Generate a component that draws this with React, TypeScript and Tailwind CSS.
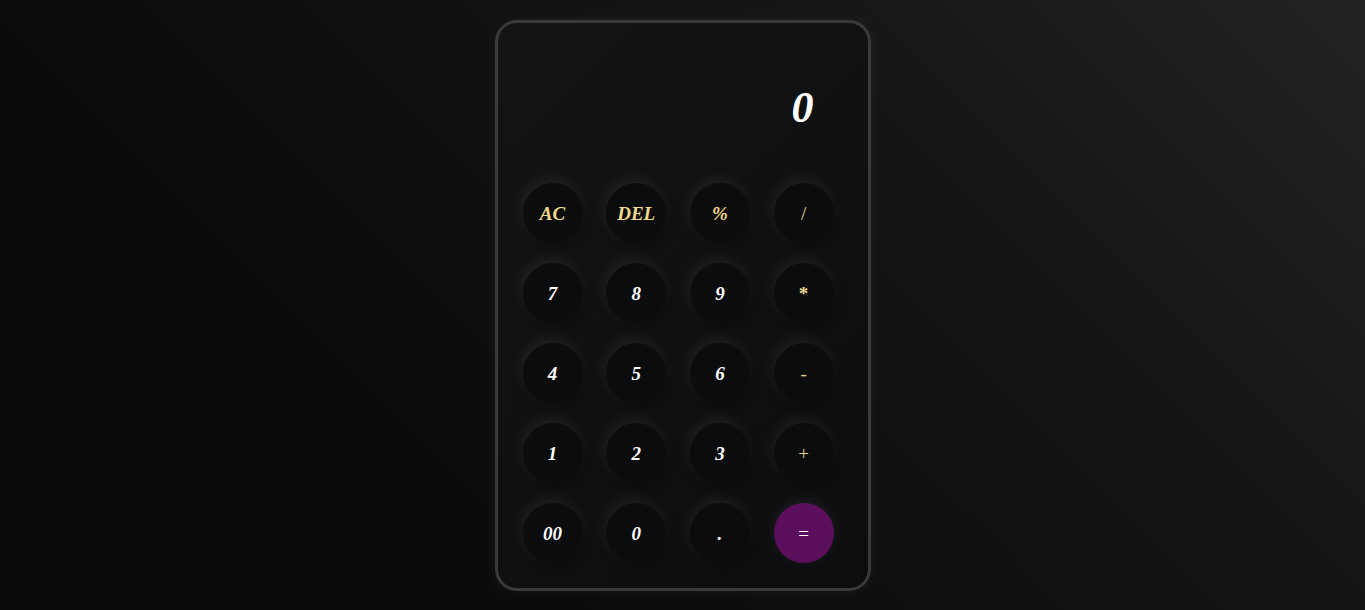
import React from "react";

type Btn = { label: string; kind: "num" | "fn" | "op" | "opb" | "eq" };

const rows: Btn[][] = [
  [
    { label: "AC", kind: "fn" },
    { label: "DEL", kind: "fn" },
    { label: "%", kind: "fn" },
    { label: "/", kind: "op" },
  ],
  [
    { label: "7", kind: "num" },
    { label: "8", kind: "num" },
    { label: "9", kind: "num" },
    { label: "*", kind: "opb" },
  ],
  [
    { label: "4", kind: "num" },
    { label: "5", kind: "num" },
    { label: "6", kind: "num" },
    { label: "-", kind: "op" },
  ],
  [
    { label: "1", kind: "num" },
    { label: "2", kind: "num" },
    { label: "3", kind: "num" },
    { label: "+", kind: "op" },
  ],
  [
    { label: "00", kind: "num" },
    { label: "0", kind: "num" },
    { label: ".", kind: "num" },
    { label: "=", kind: "eq" },
  ],
];

function Key({ b }: { b: Btn }) {
  const base =
    "w-[60px] h-[60px] rounded-full flex items-center justify-center text-[19px] italic leading-none";
  if (b.kind === "eq") {
    return (
      <button className={`${base} bg-[#5b0f5d] text-white not-italic font-normal shadow-[0_-3px_14px_rgba(255,255,255,0.07)]`}>
        {b.label}
      </button>
    );
  }
  const color =
    b.kind === "num"
      ? "text-white font-bold"
      : b.kind === "fn"
      ? "text-[#f3d98c] font-bold"
      : b.kind === "opb"
      ? "text-[#f3d98c] font-bold not-italic"
      : "text-[#e9d38f] font-normal not-italic";
  return (
    <button
      className={`${base} bg-[#0b0c0d] ${color} shadow-[-2px_-4px_14px_rgba(255,255,255,0.08),2px_4px_10px_rgba(0,0,0,0.35)]`}
    >
      {b.label}
    </button>
  );
}

export default function App() {
  return (
    <div
      className="w-full h-[610px] flex justify-center pt-5 bg-[linear-gradient(45deg,#0a0b0c_30%,#141515_70%,#232323)]"
      style={{ fontFamily: '"Liberation Serif", "Times New Roman", serif' }}
    >
      <div className="w-[376px] h-[571px] rounded-[22px] border-[3px] border-[#3a3a3a] bg-[linear-gradient(135deg,#131415,#0c0d0e)] shadow-[0_0_14px_rgba(255,255,255,0.05)] flex flex-col">
        <div className="h-[160px] flex items-start justify-end pr-[54px] pt-[63px]">
          <span className="text-white text-[44px] font-bold italic leading-none">0</span>
        </div>
        <div className="pl-[25px] grid grid-cols-[repeat(4,60px)] gap-x-[23.7px] gap-y-5">
          {rows.flat().map((b, i) => (
            <Key key={i} b={b} />
          ))}
        </div>
      </div>
    </div>
  );
}
